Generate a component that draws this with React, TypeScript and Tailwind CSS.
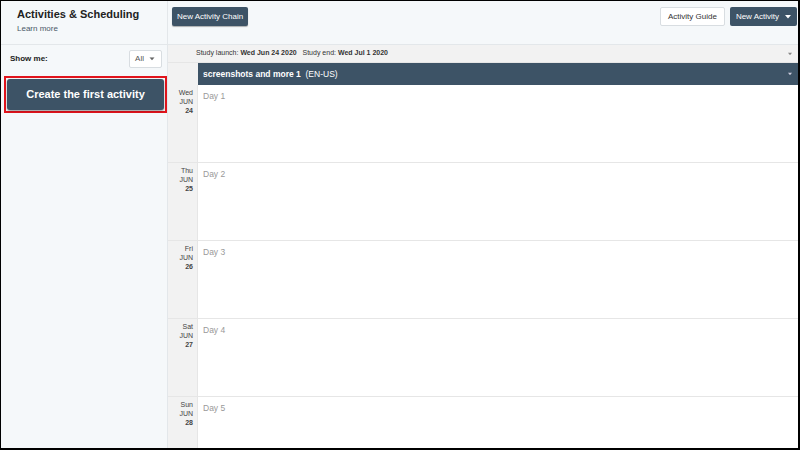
const days = [
  { dow: "Wed", day: "24", label: "Day 1" },
  { dow: "Thu", day: "25", label: "Day 2" },
  { dow: "Fri", day: "26", label: "Day 3" },
  { dow: "Sat", day: "27", label: "Day 4" },
  { dow: "Sun", day: "28", label: "Day 5" },
];

function Caret({ className }: { className?: string }) {
  return (
    <svg width="6" height="4" viewBox="0 0 6 4" className={className}>
      <path d="M0 0h6L3 3.5z" fill="currentColor" />
    </svg>
  );
}

export default function App() {
  return (
    <div
      className="w-[800px] h-[450px] overflow-hidden bg-black pt-px pl-px pr-[2px] pb-[2px]"
      style={{ fontFamily: '"Liberation Sans", Arial, sans-serif' }}
    >
      <div className="flex h-full bg-white overflow-hidden">
        {/* sidebar */}
        <aside className="w-[167px] shrink-0 bg-[#f5f8fa] border-r border-[#e3e7ea] flex flex-col">
          <div className="h-[44px] shrink-0 border-b border-[#e3e7ea] pl-[16px] pt-[6px]">
            <div className="text-[11px] font-bold text-[#222] leading-[14px]">Activities &amp; Scheduling</div>
            <div className="text-[8px] text-[#4a5968] leading-[10px] mt-[3px]">Learn more</div>
          </div>
          <div className="flex items-center justify-between pl-[9px] pr-[5px] pt-[5px]">
            <span className="text-[8px] font-bold text-[#222]">Show me:</span>
            <div className="w-[33px] h-[18px] bg-white border border-[#d8dde1] rounded-[2px] flex items-center justify-end gap-[5px] pr-[6px] text-[8px] text-[#555]">
              All <Caret className="text-[#666] scale-90" />
            </div>
          </div>
          <div className="ml-[3px] mt-[8px] w-[163px] h-[37px] border-2 border-[#e1141c] p-[1px]">
            <button className="w-full h-full bg-[#3d5366] rounded-[3px] shadow-[0_1px_2px_rgba(0,0,0,0.4)] text-white text-[11px] font-bold">
              Create the first activity
            </button>
          </div>
        </aside>

        {/* main */}
        <main className="flex-1 flex flex-col min-w-0">
          <div className="h-[44px] shrink-0 bg-[#f5f8fa] border-b border-[#e3e7ea] flex items-start justify-between pt-[6px] pl-[4px] pr-[1px]">
            <button className="h-[19px] px-[5px] bg-[#3d5366] text-white text-[8px] rounded-[2px] shadow-[0_1px_1px_rgba(0,0,0,0.3)]">
              New Activity Chain
            </button>
            <div className="flex gap-[5px]">
              <button className="h-[19px] px-[7px] bg-white border border-[#d8dde1] text-[#333] text-[8px] rounded-[2px]">
                Activity Guide
              </button>
              <button className="h-[19px] pl-[6px] pr-[6px] bg-[#3d5366] text-white text-[8px] rounded-[2px] flex items-center gap-[6px]">
                New Activity <Caret />
              </button>
            </div>
          </div>
          <div className="h-[18px] shrink-0 bg-[#f2f2f2] border-b border-[#e6e6e6] flex items-center justify-between pl-[28px] pr-[5px] text-[7px] text-[#333]">
            <span>
              Study launch: <b>Wed Jun 24 2020</b>&nbsp;&nbsp; Study end: <b>Wed Jul 1 2020</b>
            </span>
            <Caret className="text-[#888] scale-75" />
          </div>
          <div className="flex h-[22px] shrink-0">
            <div className="w-[30px] bg-[#f2f2f2] shrink-0" />
            <div className="flex-1 bg-[#3d5366] flex items-center justify-between pl-[5px] pr-[5px] text-white text-[8.5px]">
              <span>
                <b>screenshots and more 1</b>&nbsp;&nbsp;(EN-US)
              </span>
              <Caret className="text-[#ccd] scale-75" />
            </div>
          </div>
          <div className="flex flex-col">
            {days.map((d) => (
              <div key={d.day} className="flex h-[78px] shrink-0 border-b border-[#e6e6e6]">
                <div className="w-[30px] shrink-0 bg-[#f2f2f2] border-r border-[#e6e6e6] text-right pr-[4px] pt-[3px] text-[7px] leading-[9px] text-[#444]">
                  <div>{d.dow}</div>
                  <div>JUN</div>
                  <div className="font-bold">{d.day}</div>
                </div>
                <div className="flex-1 pl-[5px] pt-[5px] text-[8.5px] text-[#999]">{d.label}</div>
              </div>
            ))}
          </div>
        </main>
      </div>
    </div>
  );
}
